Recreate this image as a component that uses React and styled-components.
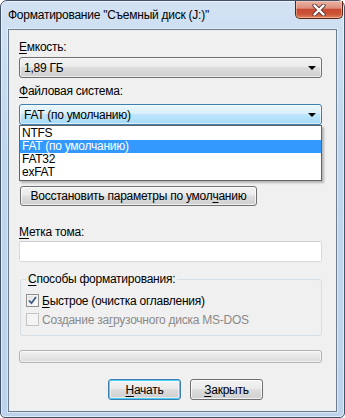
// Libraries
import React from 'react';

// Styles
import styled, { createGlobalStyle } from 'styled-components';

const GlobalStyle = createGlobalStyle`
  html, body {
    margin: 0;
    padding: 0;
    background: #ffffff;
  }
  body {
    width: 345px;
    height: 418px;
    overflow: hidden;
    font-family: "Liberation Sans", Arial, sans-serif;
    font-size: 12px;
    letter-spacing: -0.25px;
    color: #000;
  }
  * {
    box-sizing: border-box;
  }
`;

const WindowFrame = styled.div`
  width: 345px;
  height: 418px;
  display: flex;
  flex-direction: column;
  border: 1px solid #42536a;
  border-radius: 7px 7px 5px 5px;
  background: linear-gradient(180deg, #d2e2f3 0%, #c0d6ed 35%, #bcd3eb 100%);
  box-shadow: inset 0 0 0 1px rgba(255, 255, 255, 0.55);
  padding: 0 7px 5px 7px;
`;

const TitleBar = styled.div`
  height: 28px;
  display: flex;
  align-items: flex-start;
  justify-content: space-between;
  margin-right: -6px;
`;

const TitleText = styled.div`
  padding-top: 7px;
  line-height: 15px;
  color: #000;
  white-space: nowrap;
`;

const CloseButton = styled.div`
  width: 48px;
  height: 18px;
  display: flex;
  align-items: center;
  justify-content: center;
  border: 1px solid #5a2418;
  border-top: none;
  border-radius: 0 0 5px 5px;
  background: linear-gradient(
    180deg,
    #e9b3a5 0%,
    #de8f7c 42%,
    #c84a30 50%,
    #cc5538 78%,
    #e2875e 100%
  );
  box-shadow: inset 0 0 0 1px rgba(255, 220, 200, 0.45);
`;

const Client = styled.div`
  flex: 1;
  display: flex;
  flex-direction: column;
  align-items: flex-start;
  border: 1px solid #6c7d90;
  box-shadow: 0 0 0 1px rgba(255, 255, 255, 0.45);
  background: #f0f0f0;
  padding: 10px 14px 0 10px;
`;

const Label = styled.div`
  line-height: 15px;
  margin-top: ${props => props.top || 0}px;
  white-space: nowrap;
`;

const Key = styled.span`
  text-decoration: underline;
  text-underline-offset: 2px;
`;

const ComboWrap = styled.div`
  position: relative;
  width: 303px;
  margin-top: ${props => props.top || 0}px;
`;

const Combo = styled.div`
  height: 21px;
  display: flex;
  align-items: center;
  justify-content: space-between;
  padding: 0 5px 0 4px;
  border: 1px solid ${props => (props.active ? '#3c7fb1' : '#707070')};
  border-radius: 3px;
  background: ${props =>
    props.active
      ? 'linear-gradient(180deg, #eaf6fd 0%, #d9f0fc 45%, #bee6fd 50%, #a7d9f5 100%)'
      : 'linear-gradient(180deg, #f2f2f2 0%, #ebebeb 45%, #dddddd 50%, #cfcfcf 100%)'};
  box-shadow: inset 0 0 0 1px rgba(255, 255, 255, 0.6);
`;

const Arrow = styled.span`
  width: 0;
  height: 0;
  border-left: 4px solid transparent;
  border-right: 4px solid transparent;
  border-top: 4px solid #000;
`;

const DropList = styled.div`
  position: absolute;
  top: 100%;
  left: 0;
  width: 303px;
  padding: 1px 0;
  background: #ffffff;
  border: 1px solid #646464;
  box-shadow: 2px 2px 2px rgba(0, 0, 0, 0.25);
  z-index: 2;
`;

const DropItem = styled.div`
  height: 13px;
  line-height: 13px;
  padding-left: 2px;
  background: ${props => (props.selected ? '#3399ff' : 'transparent')};
  color: ${props => (props.selected ? '#ffffff' : '#000000')};
`;

const Button = styled.div`
  height: ${props => props.h || 21}px;
  width: ${props => props.w}px;
  margin-top: ${props => props.top || 0}px;
  margin-left: ${props => props.left || 0}px;
  display: flex;
  align-items: center;
  justify-content: center;
  border: 1px solid ${props => (props.primary ? '#3c7fb1' : '#707070')};
  border-radius: 3px;
  background: linear-gradient(180deg, #f2f2f2 0%, #ebebeb 45%, #dddddd 50%, #cfcfcf 100%);
  box-shadow: ${props =>
    props.primary
      ? 'inset 0 0 0 1px #48d0fb, inset 0 0 0 2px rgba(255,255,255,.5)'
      : 'inset 0 0 0 1px rgba(255,255,255,.7)'};
  white-space: nowrap;
`;

const TextInput = styled.div`
  width: 303px;
  height: 21px;
  margin-top: 1px;
  background: #ffffff;
  border: 1px solid #d6dadf;
  border-top-color: #c9ced4;
  border-radius: 2px;
`;

const GroupBox = styled.fieldset`
  width: 302px;
  margin: 10px 0 0 1px;
  padding: 4px 0 6px 5px;
  border: 1px solid #d5dfe5;
  border-radius: 3px;
  min-width: 0;
`;

const GroupLegend = styled.legend`
  padding: 0 2px;
  line-height: 15px;
`;

const CheckRow = styled.div`
  height: 19px;
  display: flex;
  align-items: center;
  gap: 3px;
  color: ${props => (props.disabled ? '#8a8a8a' : '#000')};
`;

const CheckBox = styled.span`
  width: 13px;
  height: 13px;
  display: flex;
  align-items: center;
  justify-content: center;
  border: 1px solid ${props => (props.disabled ? '#c4c4c4' : '#8e8f8f')};
  background: ${props =>
    props.disabled
      ? '#f4f4f4'
      : 'linear-gradient(135deg, #dcdcdc 0%, #f4f4f4 60%, #ffffff 100%)'};
  box-shadow: inset 0 0 0 1px #f4f4f4;
`;

const ProgressBar = styled.div`
  width: 303px;
  height: 13px;
  margin-top: 14px;
  border: 1px solid #b2b2b2;
  border-radius: 3px;
  background: linear-gradient(180deg, #f3f3f3 0%, #e6e6e6 50%, #dadada 100%);
  box-shadow: inset 0 0 0 1px rgba(255, 255, 255, 0.6);
`;

const ButtonRow = styled.div`
  display: flex;
  gap: 9px;
  margin-top: 16px;
  padding-left: 89px;
`;

// Components
const CloseGlyph = () => (
  <svg width="14" height="12" viewBox="0 0 14 12">
    <path
      d="M2.5 1.5 L11.5 10.5 M11.5 1.5 L2.5 10.5"
      stroke="#5a3a36"
      strokeWidth="4.2"
      strokeLinecap="round"
    />
    <path
      d="M2.5 1.5 L11.5 10.5 M11.5 1.5 L2.5 10.5"
      stroke="#ffffff"
      strokeWidth="2.4"
      strokeLinecap="round"
    />
  </svg>
);

const CheckGlyph = () => (
  <svg width="9" height="9" viewBox="0 0 9 9">
    <path
      d="M1 4.5 L3.5 7.2 L8 1"
      fill="none"
      stroke="#3b5a86"
      strokeWidth="1.8"
    />
  </svg>
);

const fileSystems = [
  { name: 'NTFS' },
  { name: 'FAT (по умолчанию)', selected: true },
  { name: 'FAT32' },
  { name: 'exFAT' }
];

const App = () => (
  <>
    <GlobalStyle />
    <WindowFrame>
      <TitleBar>
        <TitleText>Форматирование "Съемный диск (J:)"</TitleText>
        <CloseButton>
          <CloseGlyph />
        </CloseButton>
      </TitleBar>
      <Client>
        <Label>
          <Key>Е</Key>мкость:
        </Label>
        <ComboWrap top={2}>
          <Combo>
            <span>1,89 ГБ</span>
            <Arrow />
          </Combo>
        </ComboWrap>

        <Label top={6}>
          <Key>Ф</Key>айловая система:
        </Label>
        <ComboWrap top={5}>
          <Combo active>
            <span>FAT (по умолчанию)</span>
            <Arrow />
          </Combo>
          <DropList>
            {fileSystems.map(fs => (
              <DropItem key={fs.name} selected={fs.selected}>
                {fs.name}
              </DropItem>
            ))}
          </DropList>
        </ComboWrap>

        <Button w={237} h={20} top={61} left={1}>
          Восстановить параметры по умол<Key>ч</Key>анию
        </Button>

        <Label top={19}>
          <Key>М</Key>етка тома:
        </Label>
        <TextInput />

        <GroupBox>
          <GroupLegend>
            <Key>С</Key>пособы форматирования:
          </GroupLegend>
          <CheckRow>
            <CheckBox>
              <CheckGlyph />
            </CheckBox>
            <span>
              <Key>Б</Key>ыстрое (очистка оглавления)
            </span>
          </CheckRow>
          <CheckRow disabled>
            <CheckBox disabled />
            <span>
              Создание за<Key>г</Key>рузочного диска MS-DOS
            </span>
          </CheckRow>
        </GroupBox>

        <ProgressBar />

        <ButtonRow>
          <Button w={73} primary>
            <span>
              <Key>Н</Key>ачать
            </span>
          </Button>
          <Button w={73}>
            <span>
              <Key>З</Key>акрыть
            </span>
          </Button>
        </ButtonRow>
      </Client>
    </WindowFrame>
  </>
);

export default App;
